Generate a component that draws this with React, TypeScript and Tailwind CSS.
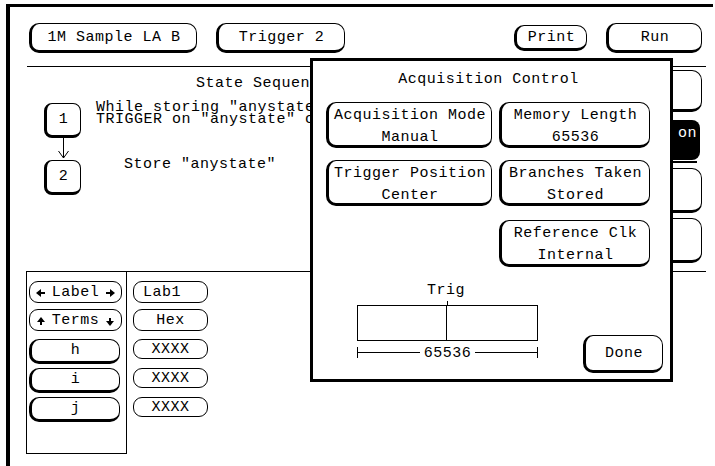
import type { ReactNode } from "react";

// HP logic analyzer style soft keys: thin outline, heavy left + bottom edge
function Key({ className, children }: { className: string; children?: ReactNode }) {
  return (
    <div
      className={
        "flex items-center justify-center pt-[2px] border border-black border-l-[3px] border-b-[3px] rounded-[10px] whitespace-nowrap " +
        className
      }
    >
      {children}
    </div>
  );
}

function Pill({ className, children }: { className: string; children?: ReactNode }) {
  return (
    <div
      className={
        "flex items-center pt-[2px] border border-black rounded-[9px] whitespace-nowrap leading-[14px] " + className
      }
    >
      {children}
    </div>
  );
}

function DialogKey({ top, bottom, className }: { top: string; bottom: string; className: string }) {
  return (
    <div
      className={
        "flex flex-col items-center pt-[2px] border border-black border-l-[3px] border-b-[3px] rounded-[10px] leading-[22px] whitespace-nowrap " +
        className
      }
    >
      <span>{top}</span>
      <span>{bottom}</span>
    </div>
  );
}

function SeqBox({ n }: { n: string }) {
  return (
    <div className="flex items-center justify-center pt-[2px] w-[37px] h-[35px] border border-black border-l-[3px] border-b-[3px] rounded-[8px] shrink-0">
      {n}
    </div>
  );
}

function ArrowLeft() {
  return (
    <svg width="10" height="8" viewBox="0 0 10 8">
      <polygon points="0,4 5,0 5,8" fill="black" />
      <rect x="5" y="3" width="4" height="2" fill="black" />
    </svg>
  );
}

function ArrowRight() {
  return (
    <svg width="10" height="8" viewBox="0 0 10 8">
      <polygon points="10,4 5,0 5,8" fill="black" />
      <rect x="1" y="3" width="4" height="2" fill="black" />
    </svg>
  );
}

function ArrowUp() {
  return (
    <svg width="8" height="9" viewBox="0 0 8 9">
      <polygon points="4,0 8,5 0,5" fill="black" />
      <rect x="3" y="5" width="2" height="3" fill="black" />
    </svg>
  );
}

function ArrowDown() {
  return (
    <svg width="8" height="9" viewBox="0 0 8 9">
      <polygon points="4,9 8,4 0,4" fill="black" />
      <rect x="3" y="1" width="2" height="3" fill="black" />
    </svg>
  );
}

export default function App() {
  return (
    <div className="relative w-[715px] h-[466px] overflow-hidden bg-white text-black text-[15px] tracking-[0.5px] font-['Liberation_Mono',monospace]">
      <div className="ml-[6px] mr-[2px] mt-[4px] h-[462px] border-t-[3px] border-l-[4px] border-black flex flex-col">
        {/* top keys */}
        <div className="flex items-center pt-[16px] pl-[19px] pr-[11px]">
          <Key className="w-[168px] h-[30px]">1M Sample LA B</Key>
          <Key className="ml-[19px] w-[129px] h-[30px]">Trigger 2</Key>
          <div className="flex-1" />
          <Key className="w-[73px] h-[26px] border-b">Print</Key>
          <Key className="ml-[19px] w-[96px] h-[30px]">Run</Key>
        </div>

        <div className="mt-[13px] ml-[17px] mr-[7px] h-px bg-black" />

        {/* sequence area */}
        <div className="flex h-[204px]">
          <div className="flex-1 min-w-0">
            <div className="pl-[186px] pt-[10px] leading-[14px] whitespace-nowrap">State Sequence Levels</div>
            <div className="flex mt-[12px] ml-[34px]">
              <SeqBox n="1" />
              <div className="ml-[15px] -mt-[1px] leading-[12px] whitespace-nowrap">
                <div>While storing ″anystate″</div>
                <div>TRIGGER on ″anystate″ occurs</div>
              </div>
            </div>
            <svg className="ml-[34px]" width="37" height="22" viewBox="0 0 37 22">
              <line x1="19.5" y1="0" x2="19.5" y2="20" stroke="black" strokeWidth="1" />
              <polyline points="14.5,13 19.5,20 24.5,13" fill="none" stroke="black" strokeWidth="1" />
            </svg>
            <div className="flex ml-[34px]">
              <SeqBox n="2" />
              <div className="ml-[43px] -mt-[1px] leading-[12px] whitespace-nowrap">Store ″anystate″</div>
            </div>
          </div>

          {/* right column keys, mostly covered by the dialog */}
          <div className="w-[130px] mr-[11px] pt-[3px] flex flex-col">
            <div className="h-[42px] border border-black border-b-[3px] rounded-[10px]" />
            <div className="mt-[8px] mr-[2px] h-[40px] bg-black rounded-[8px] text-white text-right pr-[3px] pt-[7px] leading-[14px] whitespace-nowrap">
              <span className="invisible">Acquisiti</span>on
            </div>
            <div className="mt-[1px] mr-[5px] h-[2px] bg-black" />
            <div className="mt-[5px] h-[45px] border border-black border-b-[3px] rounded-[10px]" />
            <div className="mt-[5px] h-[45px] border border-black border-b-[3px] rounded-[10px]" />
          </div>
        </div>

        <div className="ml-[16px] mr-[7px] h-px bg-black" />

        {/* label / terms table */}
        <div className="flex ml-[16px]">
          <div className="w-[101px] h-[182px] border-l border-r border-b border-black flex flex-col pl-[2px] pt-[9px]">
            <Pill className="w-[93px] h-[22px] justify-between px-[6px]">
              <ArrowLeft />
              <span>Label</span>
              <ArrowRight />
            </Pill>
            <Pill className="mt-[6px] w-[93px] h-[22px] justify-between px-[7px]">
              <ArrowUp />
              <span>Terms</span>
              <ArrowDown />
            </Pill>
            <Key className="mt-[8px] w-[91px] h-[25px] rounded-[9px]">h</Key>
            <Key className="mt-[4px] w-[91px] h-[25px] rounded-[9px]">i</Key>
            <Key className="mt-[4px] w-[91px] h-[25px] rounded-[9px]">j</Key>
          </div>
          <div className="ml-[6px] pt-[9px] flex flex-col">
            <Pill className="w-[75px] h-[22px] pl-[9px]">Lab1</Pill>
            <Pill className="mt-[6px] w-[75px] h-[22px] justify-center">Hex</Pill>
            <Pill className="mt-[8px] w-[75px] h-[20px] justify-center">XXXX</Pill>
            <Pill className="mt-[9px] w-[75px] h-[20px] justify-center">XXXX</Pill>
            <Pill className="mt-[9px] w-[75px] h-[20px] justify-center">XXXX</Pill>
          </div>
        </div>
      </div>

      {/* Acquisition Control dialog */}
      <div className="absolute left-[310px] top-[58px] w-[363px] h-[324px] border-[3px] border-black bg-white flex flex-col">
        <div className="pt-[12px] pr-[6px] text-center leading-[14px]">Acquisition Control</div>
        <div className="grid grid-cols-[166px_151px] gap-x-[7px] ml-[13px] mt-[15px]">
          <DialogKey className="h-[46px]" top="Acquisition Mode" bottom="Manual" />
          <DialogKey className="h-[46px]" top="Memory Length" bottom="65536" />
          <DialogKey className="mt-[12px] h-[46px]" top="Trigger Position" bottom="Center" />
          <DialogKey className="mt-[12px] h-[46px]" top="Branches Taken" bottom="Stored" />
          <div />
          <DialogKey className="mt-[14px] h-[47px]" top="Reference Clk" bottom="Internal" />
        </div>
        <div className="flex items-start mt-[16px]">
          <div className="ml-[44px] w-[181px] flex flex-col">
            <div className="text-center leading-[14px] pr-[3px] pt-[1px] -mb-[1px]">Trig</div>
            <div className="mt-[4px] ml-[90px] w-px h-[4px] bg-black" />
            <div className="flex h-[36px] border border-black">
              <div className="w-[89px] border-r border-black" />
            </div>
            <div className="mt-[6px] h-[11px] flex items-center">
              <div className="w-px h-[11px] bg-black" />
              <div className="flex-1 h-px bg-black" />
              <span className="px-[4px] pt-[2px] leading-[14px]">65536</span>
              <div className="flex-1 h-px bg-black" />
              <div className="w-px h-[11px] bg-black" />
            </div>
          </div>
          <Key className="ml-auto mr-[7px] mt-[52px] w-[80px] h-[38px]">Done</Key>
        </div>
      </div>
    </div>
  );
}
